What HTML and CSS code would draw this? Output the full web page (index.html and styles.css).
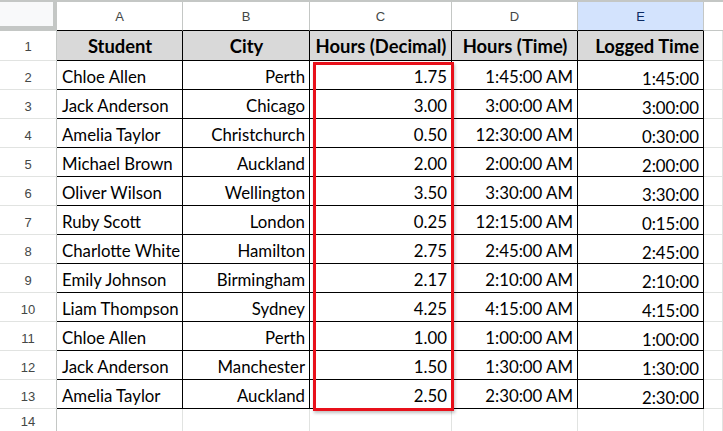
FILE: index.html
```html
<!DOCTYPE html>
<html>
<head>
<meta charset="utf-8">
<link rel="stylesheet" href="styles.css">
</head>
<body>
<div class="sheet">
  <div class="corner"></div>
  <div class="colhead">A</div>
  <div class="colhead">B</div>
  <div class="colhead">C</div>
  <div class="colhead">D</div>
  <div class="colhead sel">E</div>
  <div class="colhead empty"></div>

  <div class="rowhead first">1</div>
  <div class="cell hdr">Student</div>
  <div class="cell hdr">City</div>
  <div class="cell hdr">Hours (Decimal)</div>
  <div class="cell hdr">Hours (Time)</div>
  <div class="cell hdr right">Logged Time</div>
  <div class="blank"></div>

  <div class="rowhead">2</div><div class="cell">Chloe Allen</div><div class="cell right">Perth</div><div class="cell right">1.75</div><div class="cell right">1:45:00 AM</div><div class="cell right low">1:45:00</div><div class="blank"></div>
  <div class="rowhead">3</div><div class="cell">Jack Anderson</div><div class="cell right">Chicago</div><div class="cell right">3.00</div><div class="cell right">3:00:00 AM</div><div class="cell right low">3:00:00</div><div class="blank"></div>
  <div class="rowhead">4</div><div class="cell">Amelia Taylor</div><div class="cell right">Christchurch</div><div class="cell right">0.50</div><div class="cell right">12:30:00 AM</div><div class="cell right low">0:30:00</div><div class="blank"></div>
  <div class="rowhead">5</div><div class="cell">Michael Brown</div><div class="cell right">Auckland</div><div class="cell right">2.00</div><div class="cell right">2:00:00 AM</div><div class="cell right low">2:00:00</div><div class="blank"></div>
  <div class="rowhead">6</div><div class="cell">Oliver Wilson</div><div class="cell right">Wellington</div><div class="cell right">3.50</div><div class="cell right">3:30:00 AM</div><div class="cell right low">3:30:00</div><div class="blank"></div>
  <div class="rowhead">7</div><div class="cell">Ruby Scott</div><div class="cell right">London</div><div class="cell right">0.25</div><div class="cell right">12:15:00 AM</div><div class="cell right low">0:15:00</div><div class="blank"></div>
  <div class="rowhead">8</div><div class="cell">Charlotte White</div><div class="cell right">Hamilton</div><div class="cell right">2.75</div><div class="cell right">2:45:00 AM</div><div class="cell right low">2:45:00</div><div class="blank"></div>
  <div class="rowhead">9</div><div class="cell">Emily Johnson</div><div class="cell right">Birmingham</div><div class="cell right">2.17</div><div class="cell right">2:10:00 AM</div><div class="cell right low">2:10:00</div><div class="blank"></div>
  <div class="rowhead">10</div><div class="cell">Liam Thompson</div><div class="cell right">Sydney</div><div class="cell right">4.25</div><div class="cell right">4:15:00 AM</div><div class="cell right low">4:15:00</div><div class="blank"></div>
  <div class="rowhead">11</div><div class="cell">Chloe Allen</div><div class="cell right">Perth</div><div class="cell right">1.00</div><div class="cell right">1:00:00 AM</div><div class="cell right low">1:00:00</div><div class="blank"></div>
  <div class="rowhead">12</div><div class="cell">Jack Anderson</div><div class="cell right">Manchester</div><div class="cell right">1.50</div><div class="cell right">1:30:00 AM</div><div class="cell right low">1:30:00</div><div class="blank"></div>
  <div class="rowhead">13</div><div class="cell">Amelia Taylor</div><div class="cell right">Auckland</div><div class="cell right">2.50</div><div class="cell right">2:30:00 AM</div><div class="cell right low">2:30:00</div><div class="blank"></div>

  <div class="rowhead last">14</div>
  <div class="blank"></div><div class="blank"></div><div class="blank"></div><div class="blank"></div><div class="blank"></div><div class="blank"></div>

  <div class="highlight"></div>
</div>
</body>
</html>
```

FILE: styles.css
```css
* { box-sizing: border-box; }
html, body { margin: 0; padding: 0; background: #fff; }
body { width: 723px; height: 431px; overflow: hidden; }

.sheet {
  position: relative;
  display: grid;
  grid-template-columns: 57px 126px 127px 142px 126px 126px 1fr;
  grid-template-rows: 29px 30px repeat(12, 29px) 30px;
  border-top: 2px solid #c4c7c5;
  font-family: "Lato", "Open Sans", sans-serif;
  font-size: 16.8px;
  color: #000;
}

.corner {
  background: #f8f9fa;
  border-right: 4px solid #c4c7c5;
  border-bottom: 5px solid #c4c7c5;
}

.colhead {
  display: flex;
  align-items: center;
  justify-content: center;
  font-family: "Liberation Sans", Arial, sans-serif;
  font-size: 13px;
  color: #444746;
  border-right: 1px solid #c4c7c5;
  border-bottom: 1px solid #000;
  background: #fff;
}
.colhead.sel { background: #d3e3fd; color: #0b2a63; }
.colhead.empty { border-right: none; border-bottom: 1px solid #c4c7c5; }

.rowhead {
  display: flex;
  align-items: center;
  justify-content: center;
  font-family: "Liberation Sans", Arial, sans-serif;
  font-size: 13px;
  color: #444746;
  border-right: 1px solid #c4c7c5;
  border-bottom: 1px solid #e1e3e1;
  padding-top: 4px;
}
.rowhead.first { padding-top: 1px; }
.rowhead.last { border-bottom: none; padding-top: 0; align-items: flex-start; padding-top: 5px; }

.cell {
  display: flex;
  align-items: center;
  padding: 3px 4px 0 5px;
  border-right: 1px solid #000;
  border-bottom: 1px solid #000;
  white-space: nowrap;
  overflow: hidden;
}
.cell.right { justify-content: flex-end; }
.cell.low { padding-top: 6px; }

.hdr {
  background: #d9d9d9;
  font-weight: 700;
  font-size: 18.4px;
  justify-content: center;
  padding-top: 1px;
}
.hdr.right { justify-content: flex-end; }

.blank {
  border-right: 1px solid #e1e3e1;
  border-bottom: 1px solid #e1e3e1;
}

.highlight {
  position: absolute;
  left: 313px;
  top: 60px;
  width: 141px;
  height: 349px;
  border: 3px solid #e8101a;
  box-shadow: 1px 2px 3px rgba(0, 0, 0, 0.25);
  pointer-events: none;
}
```
